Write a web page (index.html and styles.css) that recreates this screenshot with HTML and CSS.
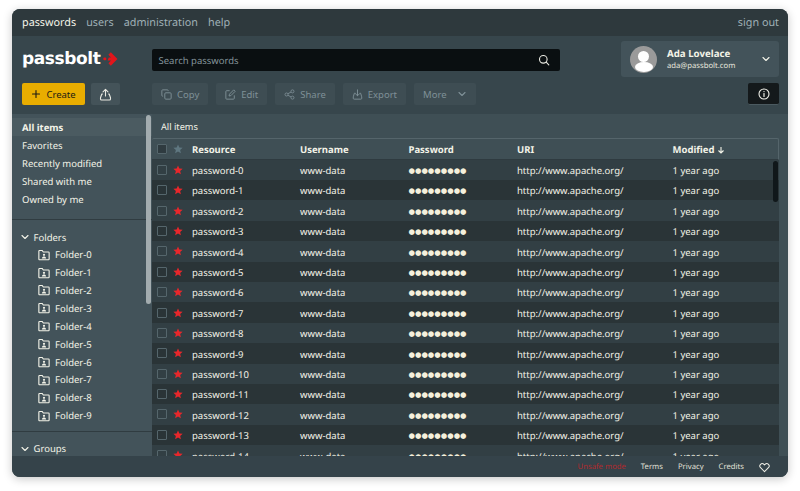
FILE: index.html
```html
<!DOCTYPE html>
<html lang="en">
<head>
<meta charset="utf-8">
<title>passbolt</title>
<link rel="stylesheet" href="styles.css">
</head>
<body>
<svg class="defs" width="0" height="0" aria-hidden="true">
  <symbol id="star" viewBox="0 0 20 20"><path d="M10 1l2.700 6.100 6.600.6-5 4.400 1.500 6.500L10 15.200 4.200 18.600l1.500-6.500-5-4.400 6.600-.6z" fill="currentColor"/></symbol>
  <symbol id="folder" viewBox="0 0 14 14"><path d="M1 11.700V2.500c0-.5.300-.8.800-.8h3l1.400 1.800h6c.5 0 .8.300.8.800v7.400c0 .5-.3.800-.8.800H1.800c-.5 0-.8-.3-.8-.8z" fill="none" stroke="currentColor" stroke-width="1.300" stroke-linejoin="round"/><circle cx="7" cy="6.800" r="1.300" fill="currentColor"/><path d="M4.500 11c.3-1.600 1.300-2.200 2.500-2.200s2.200.6 2.500 2.200z" fill="currentColor"/></symbol>
  <symbol id="chev" viewBox="0 0 10 10"><path d="M2 3.500L5 6.500l3-3" fill="none" stroke="currentColor" stroke-width="1.100" stroke-linecap="round" stroke-linejoin="round"/></symbol>
</svg>
<div class="app">
  <nav class="topbar">
    <div class="toplinks">
      <a class="toplink active">passwords</a>
      <a class="toplink">users</a>
      <a class="toplink">administration</a>
      <a class="toplink">help</a>
    </div>
    <a class="toplink">sign out</a>
  </nav>

  <header class="header">
    <div class="row-brand">
      <div class="brand">
        <span class="brand-name">passbolt</span>
        <svg class="brand-mark" width="15" height="14" viewBox="0 0 15 14"><path d="M7.800 0.300L14.500 7 7.800 13.700 5.400 11.300 8 8.600H4.600L5.800 5.400H8L5.400 2.700z" fill="#e2151b"/><rect x="0.300" y="5.500" width="3" height="2.800" rx="1" fill="#e2151b"/></svg>
      </div>
      <div class="search">
        <span>Search passwords</span>
        <svg width="12" height="12" viewBox="0 0 12 12"><circle cx="5.300" cy="5.300" r="3.800" fill="none" stroke="#e8e8e0" stroke-width="1.100"/><path d="M8.200 8.200L10.800 10.800" stroke="#e8e8e0" stroke-width="1.100" stroke-linecap="round"/></svg>
      </div>
      <div class="user">
        <div class="avatar"><i class="avatar-head"></i><i class="avatar-body"></i></div>
        <div class="user-info">
          <strong>Ada Lovelace</strong>
          <span>ada@passbolt.com</span>
        </div>
        <svg class="user-chev" width="10" height="10"><use href="#chev"/></svg>
      </div>
    </div>
    <div class="row-actions">
      <div class="primary-actions">
        <button class="btn btn-create">
          <svg width="10" height="10" viewBox="0 0 10 10"><path d="M5 1.500v7M1.500 5h7" stroke="#1b1b14" stroke-width="1.100" stroke-linecap="round"/></svg>
          Create
        </button>
        <button class="btn btn-upload">
          <svg width="13" height="13" viewBox="0 0 13 13"><path d="M6.500 8V1.500M4 3.800l2.500-2.500L9 3.800M3.500 6H2.800L1.500 9.800V11a1 1 0 0 0 1 1h8a1 1 0 0 0 1-1V9.800L10.200 6H9.500" fill="none" stroke="#e8e8e0" stroke-width="1.100" stroke-linecap="round" stroke-linejoin="round"/></svg>
        </button>
      </div>
      <div class="tools">
        <button class="btn btn-tool">
          <svg width="11" height="11" viewBox="0 0 13 13"><rect x="4.500" y="4.500" width="7.500" height="7.500" rx="1.200" fill="none" stroke="currentColor" stroke-width="1.100"/><path d="M2.500 8.500H2a1 1 0 0 1-1-1V2a1 1 0 0 1 1-1h5.500a1 1 0 0 1 1 1v.5" fill="none" stroke="currentColor" stroke-width="1.100"/></svg>
          Copy
        </button>
        <button class="btn btn-tool">
          <svg width="11" height="11" viewBox="0 0 13 13"><path d="M11 7.500V11a1 1 0 0 1-1 1H2a1 1 0 0 1-1-1V3a1 1 0 0 1 1-1h3.500" fill="none" stroke="currentColor" stroke-width="1.100"/><path d="M10.300 1L12 2.700 7 7.800l-2.200.5.500-2.200z" fill="none" stroke="currentColor" stroke-width="1.100" stroke-linejoin="round"/></svg>
          Edit
        </button>
        <button class="btn btn-tool">
          <svg width="11" height="11" viewBox="0 0 13 13"><circle cx="10" cy="2.800" r="1.800" fill="none" stroke="currentColor"/><circle cx="3" cy="6.500" r="1.800" fill="none" stroke="currentColor"/><circle cx="10" cy="10.200" r="1.800" fill="none" stroke="currentColor"/><path d="M4.600 5.600l3.800-2M4.600 7.400l3.800 2" stroke="currentColor"/></svg>
          Share
        </button>
        <button class="btn btn-tool">
          <svg width="11" height="11" viewBox="0 0 13 13"><path d="M6.500 1v6.800M4 5.500l2.500 2.500L9 5.500M3.500 5H2.800L1.500 9.300V11a1 1 0 0 0 1 1h8a1 1 0 0 0 1-1V9.300L10.200 5H9.500" fill="none" stroke="currentColor" stroke-width="1.100" stroke-linecap="round" stroke-linejoin="round"/></svg>
          Export
        </button>
        <button class="btn btn-tool btn-more">
          More
          <svg width="10" height="10"><use href="#chev"/></svg>
        </button>
      </div>
      <button class="btn btn-info">
        <svg width="12" height="12" viewBox="0 0 12 12"><circle cx="6" cy="6" r="5" fill="none" stroke="#f0f0e8" stroke-width="1.100"/><path d="M6 5.500v3" stroke="#f0f0e8" stroke-width="1.200" stroke-linecap="round"/><circle cx="6" cy="3.600" r=".7" fill="#f0f0e8"/></svg>
      </button>
    </div>
  </header>

  <main class="body">
    <aside class="sidebar">
      <ul class="filters">
        <li class="filter selected">All items</li>
        <li class="filter">Favorites</li>
        <li class="filter">Recently modified</li>
        <li class="filter">Shared with me</li>
        <li class="filter">Owned by me</li>
      </ul>
      <section class="tree">
        <div class="tree-title"><svg width="10" height="10"><use href="#chev"/></svg>Folders</div>
        <ul class="folders">
          <li class="folder"><svg width="12" height="12"><use href="#folder"/></svg>Folder-0</li>
          <li class="folder"><svg width="12" height="12"><use href="#folder"/></svg>Folder-1</li>
          <li class="folder"><svg width="12" height="12"><use href="#folder"/></svg>Folder-2</li>
          <li class="folder"><svg width="12" height="12"><use href="#folder"/></svg>Folder-3</li>
          <li class="folder"><svg width="12" height="12"><use href="#folder"/></svg>Folder-4</li>
          <li class="folder"><svg width="12" height="12"><use href="#folder"/></svg>Folder-5</li>
          <li class="folder"><svg width="12" height="12"><use href="#folder"/></svg>Folder-6</li>
          <li class="folder"><svg width="12" height="12"><use href="#folder"/></svg>Folder-7</li>
          <li class="folder"><svg width="12" height="12"><use href="#folder"/></svg>Folder-8</li>
          <li class="folder"><svg width="12" height="12"><use href="#folder"/></svg>Folder-9</li>
        </ul>
      </section>
      <section class="tree">
        <div class="tree-title"><svg width="10" height="10"><use href="#chev"/></svg>Groups</div>
      </section>
      <div class="side-scroll"></div>
    </aside>

    <section class="content">
      <div class="crumb">All items</div>
      <div class="grid">
        <div class="grid-head">
          <div class="row">
            <span class="cell-check"><i class="check check-head"></i></span>
            <span class="cell-star star-head"><svg width="10" height="10"><use href="#star"/></svg></span>
            <span class="cell">Resource</span><span class="cell">Username</span><span class="cell">Password</span><span class="cell">URI</span>
            <span class="cell">Modified <svg class="sort" width="8" height="8" viewBox="0 0 8 8"><path d="M4 1v6M1.500 4.500L4 7l2.500-2.500" fill="none" stroke="currentColor" stroke-width="1.100"/></svg></span>
          </div>
        </div>
        <div class="grid-body" id="rows"></div>
        <div class="grid-scroll"></div>
      </div>
    </section>
  </main>

  <footer class="footer">
    <a class="unsafe">Unsafe mode</a>
    <a>Terms</a>
    <a>Privacy</a>
    <a>Credits</a>
    <svg width="11" height="11" viewBox="0 0 12 12"><path d="M6 10.500L1.700 6.200a2.600 2.600 0 0 1 3.700-3.700l.6.600.6-.6a2.600 2.600 0 0 1 3.700 3.700z" fill="none" stroke="#eeeee6" stroke-width="1.100" stroke-linejoin="round"/></svg>
  </footer>
</div>
<script src="app.js"></script>
</body>
</html>
```

FILE: styles.css
```css
* { box-sizing: border-box; }
html, body { height: 100%; }
body {
  margin: 0;
  padding: 9px 12px 14px 12px;
  background: #fff;
  font-family: "Noto Sans", sans-serif;
  font-size: 9.500px;
  text-rendering: geometricPrecision;
  color: #f3f3e8;
  overflow: hidden;
}
.defs { position: absolute; }
ul { list-style: none; margin: 0; padding: 0; }
svg { display: block; flex: none; }
button { font: inherit; color: inherit; border: 0; }

.app {
  height: 468px;
  display: flex;
  flex-direction: column;
  border-radius: 8px;
  overflow: hidden;
  background: #37464c;
  box-shadow: 0 2px 10px rgba(0, 0, 0, .22);
}

.topbar {
  flex: none;
  height: 27px;
  padding: 0 9px 0 10px;
  display: flex;
  align-items: center;
  justify-content: space-between;
  background: #2e393d;
}
.toplinks { display: flex; gap: 10px; }
.toplink { font-size: 10.800px; color: #9fb0b6; }
.toplink.active { color: #f3f3e8; }

.header {
  flex: none;
  height: 78px;
  padding: 5px 9px 0 10px;
  display: flex;
  flex-direction: column;
  gap: 6px;
  background: #37464c;
}
.row-brand { display: flex; align-items: flex-start; height: 36px; }
.brand {
  width: 130px;
  height: 36px;
  display: flex;
  align-items: center;
  gap: 3px;
}
.brand-name {
  font-family: "DejaVu Sans", sans-serif;
  font-weight: 700;
  font-size: 17px;
  letter-spacing: -.4px;
  color: #fff;
}
.search {
  margin-top: 8px;
  width: 408px;
  height: 22px;
  padding: 0 10px 0 6.500px;
  display: flex;
  align-items: center;
  justify-content: space-between;
  background: #0a0f11;
  border-radius: 2px;
  color: #84949a;
}
.user {
  margin-left: auto;
  width: 158px;
  height: 36px;
  padding: 0 8px 0 9px;
  display: flex;
  align-items: center;
  background: #43535a;
  border-radius: 3px;
}
.avatar {
  position: relative;
  width: 27px;
  height: 27px;
  border-radius: 50%;
  background: #9a9a9a;
  overflow: hidden;
  flex: none;
}
.avatar-head {
  position: absolute;
  left: 8px; top: 5px;
  width: 11px; height: 11px;
  border-radius: 50%;
  background: #fff;
}
.avatar-body {
  position: absolute;
  left: 4.500px; top: 16px;
  width: 18px; height: 10px;
  border-radius: 50%;
  background: #fff;
}
.user-info {
  margin-left: 10px;
  padding-top: 2.500px;
  display: flex;
  flex-direction: column;
  line-height: 12.500px;
}
.user-info strong { font-size: 9.700px; font-weight: 700; }
.user-info span { font-size: 7.700px; color: #e6e6de; }
.user-chev { margin-left: auto; }

.row-actions { display: flex; align-items: center; height: 22px; }
.primary-actions { width: 130px; display: flex; gap: 6px; }
.btn {
  height: 22px;
  display: flex;
  align-items: center;
  justify-content: center;
  border-radius: 2px;
  font-size: 9.500px;
  padding: 0;
}
.btn-create {
  width: 63px;
  gap: 5px;
  background: #e9ad00;
  color: #1b1b14;
}
.btn-upload { width: 29px; background: #445359; }
.tools { display: flex; gap: 8px; }
.btn-tool {
  padding: 0 9px;
  gap: 5px;
  background: #3e4d53;
  color: #7f9097;
}
.btn-more { gap: 10px; }
.btn-info {
  margin-left: auto;
  width: 31px;
  background: #14191b;
  border-bottom: 1px solid #4b5a60;
}

.body {
  flex: 1;
  min-height: 0;
  display: flex;
  background: #3f4f55;
}
.sidebar {
  position: relative;
  width: 140px;
  flex: none;
  background: #43535a;
  overflow: hidden;
}
.filters { padding: 4px 0 11px; border-bottom: 1px solid #303c41; }
.filter {
  height: 18px;
  line-height: 19.500px;
  padding-left: 10px;
}
.filter.selected { background: #4b5b61; font-weight: 700; }
.tree { padding: 8px 0 7px; border-bottom: 1px solid #303c41; }
.tree:last-of-type { border-bottom: 0; }
.tree-title {
  height: 17px;
  padding-top: 1px;
  display: flex;
  align-items: center;
  gap: 3.500px;
  padding-left: 8px;
}
.folder {
  height: 17.900px;
  padding-top: 1.500px;
  display: flex;
  align-items: center;
  gap: 5px;
  padding-left: 26px;
}
.side-scroll {
  position: absolute;
  left: 134px; top: 1px;
  width: 4.500px;
  height: 189px;
  border-radius: 3px;
  background: #a3acaf;
}

.content {
  flex: 1;
  min-width: 0;
  display: flex;
  flex-direction: column;
  padding-right: 9px;
}
.crumb {
  flex: none;
  height: 24px;
  line-height: 26px;
  padding-left: 9px;
  font-size: 9.200px;
}
.grid {
  position: relative;
  flex: 1;
  min-height: 0;
  overflow: hidden;
}
.row {
  display: grid;
  grid-template-columns: 21px 19px 108px 108.500px 108.500px 155.500px 1fr;
  align-items: center;
  height: 20.400px;
}
.cell { padding-top: 1.500px; }
.grid-head .row {
  height: 21.600px;
  background: #3f4f55;
  border-top: 1px solid #55656b;
  border-right: 1px solid #55656b;
  border-bottom: 1px solid #2f3b40;
  font-weight: 700;
  border-radius: 2px 2px 0 0;
}
.grid-body .row:nth-child(odd) { background: #323f44; }
.grid-body .row:nth-child(even) { background: #2a3437; }
.cell-check { padding-left: 5px; }
.check {
  display: block;
  width: 10px;
  height: 10px;
  border: 1px solid #55666c;
  border-radius: 1px;
}
.check-head { background: #2f3b40; }
.cell-star { color: #e8272b; }
.star-head { color: #5f7780; }
.sort { display: inline-block; vertical-align: -1px; }
.pw { font-family: "DejaVu Sans", sans-serif; font-size: 7.400px; color: #f5f0dc; }
.grid-scroll {
  position: absolute;
  right: 1px; top: 23px;
  width: 5px;
  height: 41px;
  border-radius: 3px;
  background: #10171a;
}

.footer {
  flex: none;
  height: 21px;
  padding: 1px 18px 0 0;
  display: flex;
  align-items: center;
  justify-content: flex-end;
  gap: 15px;
  background: #35434a;
  font-size: 7.700px;
  color: #e0e0d8;
}
.unsafe { color: #b02a2e; }
```

FILE: app.js
```js
var body = document.getElementById('rows');
var html = '';
for (var i = 0; i < 15; i++) {
  html += '<div class="row">' +
    '<span class="cell-check"><i class="check"></i></span>' +
    '<span class="cell-star"><svg width="10" height="10"><use href="#star"/></svg></span>' +
    '<span class="cell">password-' + i + '</span>' +
    '<span class="cell">www-data</span>' +
    '<span class="cell pw">●●●●●●●●●</span>' +
    '<span class="cell">http://www.apache.org/</span>' +
    '<span class="cell">1 year ago</span>' +
    '</div>';
}
body.innerHTML = html;
```
